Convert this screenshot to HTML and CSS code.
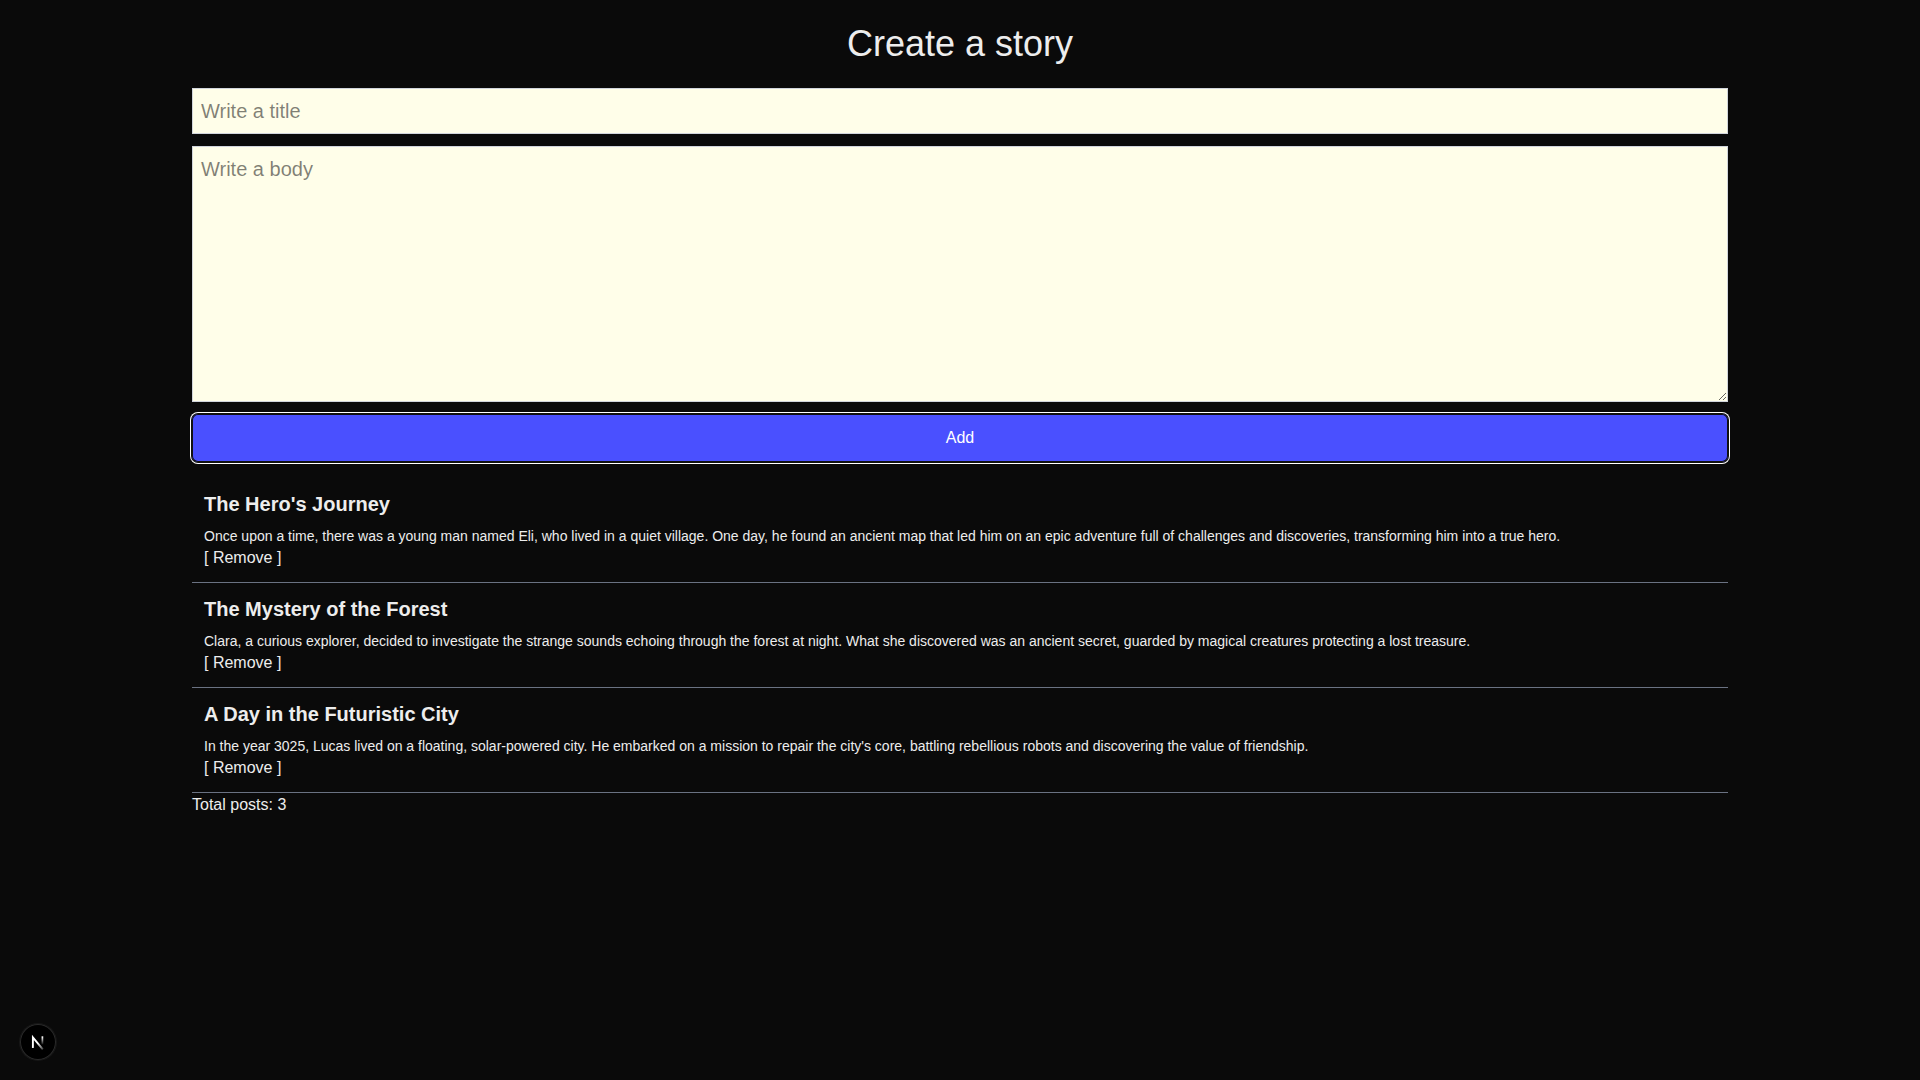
FILE: index.html
```html
<!DOCTYPE html>
<html lang="en">
<head>
<meta charset="utf-8">
<meta name="viewport" content="width=device-width, initial-scale=1">
<title>Create a story</title>
<link rel="stylesheet" href="styles.css">
</head>
<body>
<main class="page">
  <h1 class="page-title">Create a story</h1>
  <form class="story-form">
    <input class="field" type="text" name="title" placeholder="Write a title" aria-label="Title">
    <textarea class="field field-body" name="body" placeholder="Write a body" aria-label="Body"></textarea>
    <button class="add-button" type="button">Add</button>
  </form>
  <section class="posts">
    <article class="post">
      <h2 class="post-title">The Hero's Journey</h2>
      <p class="post-body">Once upon a time, there was a young man named Eli, who lived in a quiet village. One day, he found an ancient map that led him on an epic adventure full of challenges and discoveries, transforming him into a true hero.</p>
      <button class="remove-button" type="button">[ Remove ]</button>
    </article>
    <article class="post">
      <h2 class="post-title">The Mystery of the Forest</h2>
      <p class="post-body">Clara, a curious explorer, decided to investigate the strange sounds echoing through the forest at night. What she discovered was an ancient secret, guarded by magical creatures protecting a lost treasure.</p>
      <button class="remove-button" type="button">[ Remove ]</button>
    </article>
    <article class="post">
      <h2 class="post-title">A Day in the Futuristic City</h2>
      <p class="post-body">In the year 3025, Lucas lived on a floating, solar-powered city. He embarked on a mission to repair the city's core, battling rebellious robots and discovering the value of friendship.</p>
      <button class="remove-button" type="button">[ Remove ]</button>
    </article>
    <p class="total">Total posts: 3</p>
  </section>
</main>
<button class="dev-badge" type="button" aria-label="Open Next.js Dev Tools">
  <svg width="36" height="36" viewBox="0 0 36 36" fill="none" aria-hidden="true">
    <defs>
      <linearGradient id="stem" gradientUnits="userSpaceOnUse" x1="0" y1="13" x2="0" y2="21">
        <stop stop-color="#fff"/>
        <stop offset="1" stop-color="#fff" stop-opacity="0"/>
      </linearGradient>
      <linearGradient id="diagonal" gradientUnits="userSpaceOnUse" x1="18" y1="19" x2="23" y2="26">
        <stop stop-color="#fff"/>
        <stop offset="1" stop-color="#fff" stop-opacity="0.2"/>
      </linearGradient>
    </defs>
    <path d="M12.9 24V13.4L22.8 25.4" stroke="url(#diagonal)" stroke-width="1.9"/>
    <path d="M22.4 12.3V20.5" stroke="url(#stem)" stroke-width="1.7"/>
  </svg>
</button>
</body>
</html>
```
FILE: styles.css
```css
* {
  box-sizing: border-box;
  margin: 0;
}

body {
  background: #0a0a0a;
  color: #ededed;
  font: 16px/24px "Liberation Sans", Arial, sans-serif;
}

button,
input,
textarea {
  font: inherit;
}

.page {
  width: 80%;
  margin: 0 auto;
  padding-top: 16px;
}

.page-title {
  padding: 8px 0 24px;
  font-size: 36px;
  line-height: 40px;
  font-weight: 400;
  text-align: center;
}

.story-form {
  display: flex;
  flex-direction: column;
  gap: 12px;
}

.field {
  display: block;
  width: 100%;
  padding: 8px;
  border: 1px solid #d1d5dc;
  border-radius: 0;
  background: #fffee9;
  color: #000;
  font-size: 20px;
  line-height: 28px;
}

.field::placeholder {
  color: rgb(0 0 0 / 50%);
}

.field-body {
  height: 256px;
  resize: vertical;
}

.add-button {
  padding: 12px;
  border: 0;
  border-radius: 6px;
  background: #4a50ff;
  color: #fff;
  box-shadow: inset 0 0 0 1px #101010, 0 0 0 1px #101010, 0 0 0 2px #fff;
}

.posts {
  padding-top: 16px;
}

.post {
  padding: 12px;
  border-bottom: 1px solid #6a7282;
}

.post-title {
  margin-bottom: 8px;
  font-size: 20px;
  line-height: 28px;
  font-weight: 700;
}

.post-body {
  font-size: 14px;
  line-height: 20px;
}

.remove-button {
  display: block;
  padding: 0;
  border: 0;
  background: none;
  color: inherit;
  cursor: pointer;
}

.dev-badge {
  position: fixed;
  left: 20px;
  bottom: 20px;
  width: 36px;
  height: 36px;
  display: grid;
  place-items: center;
  padding: 0;
  border: 0;
  border-radius: 50%;
  background: #000;
  box-shadow: 0 0 0 1px #171717, inset 0 0 0 1px #2a2a2a;
}
```
